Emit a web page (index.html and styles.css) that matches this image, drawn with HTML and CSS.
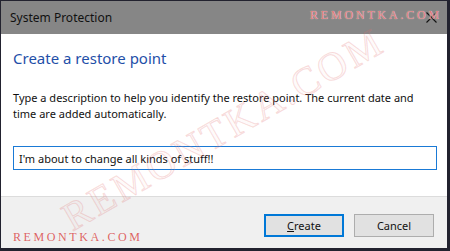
FILE: index.html
```html
<!DOCTYPE html>
<html lang="en">
<head>
    <meta charset="UTF-8">
    <title>System Protection</title>
    <link rel="stylesheet" href="styles.css">
</head>
<body>
    <div class="dialog">
        <div class="titlebar">
            <span class="title">System Protection</span>
            <span class="mark mark-top">REMONTKA.COM</span>
            <svg class="close" width="11" height="11" viewBox="0 0 11 11">
                <path d="M0.5 0.5 L10.5 10.5 M10.5 0.5 L0.5 10.5" stroke="#111" stroke-width="1.1" fill="none"/>
            </svg>
        </div>
        <div class="content">
            <h2>Create a restore point</h2>
            <p>Type a description to help you identify the restore point. The current date and time are added automatically.</p>
            <input type="text" class="desc" value="I'm about to change all kinds of stuff!!">
        </div>
        <div class="footer">
            <span class="mark mark-bottom">REMONTKA.COM</span>
            <div class="buttons">
                <button class="btn default"><u>C</u>reate</button>
                <button class="btn">Cancel</button>
            </div>
        </div>
        <!-- watermark across the dialog -->
        <div class="watermark">REMONTKA.COM</div>
    </div>
</body>
</html>
```

FILE: styles.css
```css
body {
    margin: 0;
    background: #22222f;
    font-family: "Noto Sans", "Open Sans", sans-serif;
    width: 450px;
    height: 251px;
    overflow: hidden;
}
.dialog {
    position: relative;
    width: 446px;
    height: 247px;
    margin: 1px 0 0 1px;
    display: flex;
    flex-direction: column;
    overflow: hidden;
}
.titlebar {
    height: 33px;
    background: #868686;
    display: flex;
    align-items: center;
    padding: 0 10px 0 9px;
    position: relative;
}
.title {
    font-size: 12px;
    color: #111;
    flex: 1;
}
.mark {
    font-family: "Liberation Serif", serif;
    color: #d96464;
    font-size: 12px;
    letter-spacing: 2.6px;
    text-shadow: 0 0 1px #fff;
}
.mark-top {
    position: absolute;
    right: 5px;
    top: 7px;
    color: #e07878;
    letter-spacing: 2.8px;
}
.content {
    background: #fff;
    height: 162px;
    padding: 14px 10px 0 12px;
    box-sizing: border-box;
}
.content h2 {
    margin: 0;
    font-weight: normal;
    font-size: 15px;
    color: #1f4fa8;
}
.content p {
    margin: 22px 0 0;
    font-size: 11px;
    line-height: 16px;
    color: #111;
}
.desc {
    display: block;
    margin-top: 24px;
    width: 424px;
    height: 24px;
    box-sizing: border-box;
    border: 1px solid #1a7ad6;
    padding: 0 5px;
    font-family: inherit;
    font-size: 11px;
    color: #111;
    outline: none;
    background: transparent;
}
.footer {
    flex: 1;
    background: #f0f0f0;
    border-top: 1px solid #dcdcdc;
    position: relative;
}
.mark-bottom {
    position: absolute;
    left: 12px;
    bottom: 3px;
}
.buttons {
    display: flex;
    justify-content: flex-end;
    gap: 10px;
    padding: 17px 13px 0 0;
}
.btn {
    width: 80px;
    height: 23px;
    background: #e1e1e1;
    border: 1px solid #adadad;
    font-family: inherit;
    font-size: 11px;
    color: #111;
    padding: 0;
}
.btn.default {
    border: 2px solid #0078d7;
}
.watermark {
    position: absolute;
    left: 222px;
    top: 128px;
    font-family: "Liberation Serif", serif;
    font-size: 40px;
    letter-spacing: 3px;
    color: rgba(230, 120, 120, 0.04);
    -webkit-text-stroke: 1px rgba(225, 110, 110, 0.25);
    transform: translate(-50%, -50%) rotate(-30deg);
    pointer-events: none;
    white-space: nowrap;
}
```
